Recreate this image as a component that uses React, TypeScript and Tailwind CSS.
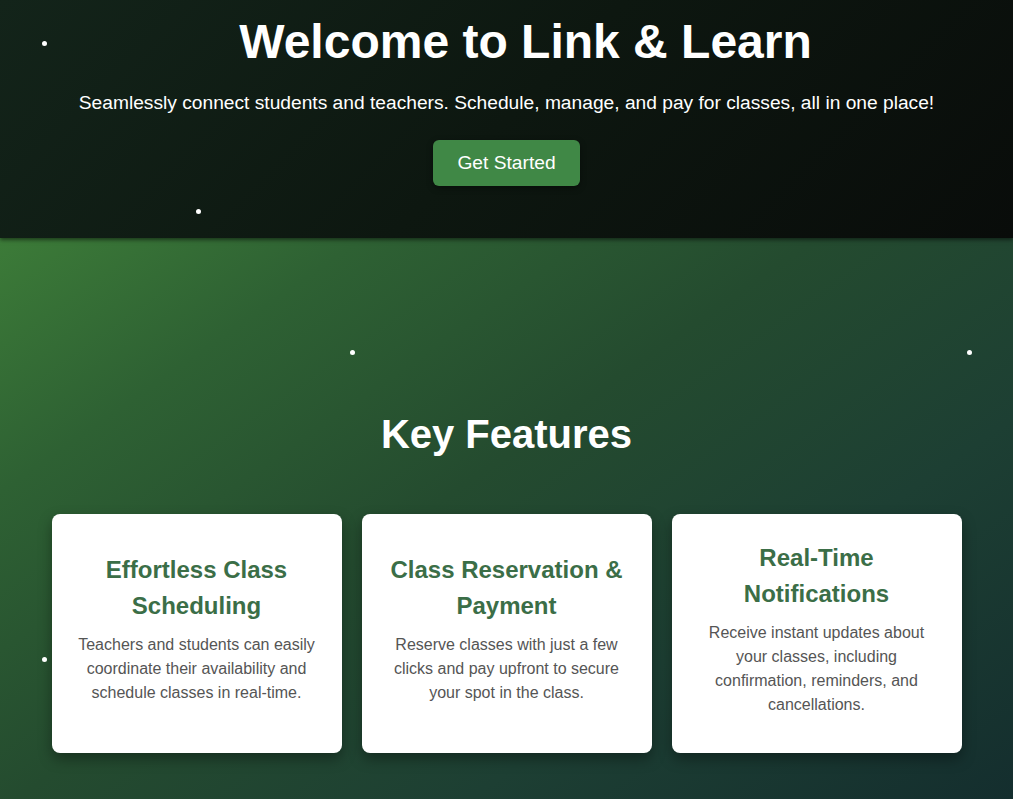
import React from "react";

const Dot = ({ className }: { className: string }) => (
  <span className={`absolute w-[5px] h-[5px] rounded-full bg-white ${className}`} />
);

const cards = [
  {
    title: "Effortless Class Scheduling",
    text: "Teachers and students can easily coordinate their availability and schedule classes in real-time.",
  },
  {
    title: "Class Reservation & Payment",
    text: "Reserve classes with just a few clicks and pay upfront to secure your spot in the class.",
  },
  {
    title: "Real-Time Notifications",
    text: "Receive instant updates about your classes, including confirmation, reminders, and cancellations.",
  },
];

export default function App() {
  return (
    <div className="relative w-full h-[799px] overflow-hidden font-['Liberation_Sans',Arial,sans-serif]">
      <header className="relative h-[238px] bg-[linear-gradient(135deg,#13241a_0%,#0d1710_50%,#090c0a_100%)] shadow-[0_2px_4px_rgba(0,0,0,0.5)] z-10 flex flex-col items-center pt-[14px]">
        <h1 className="pl-[38px] text-[48px] leading-[56px] font-bold text-white">Welcome to Link &amp; Learn</h1>
        <p className="mt-[21px] text-[19.2px] leading-[24px] text-white">
          Seamlessly connect students and teachers. Schedule, manage, and pay for classes, all in one place!
        </p>
        <button className="mt-[25px] w-[147px] h-[46px] rounded-[6px] bg-[#408846] text-white text-[19.2px] shadow-[0_2px_6px_rgba(0,0,0,0.4)]">
          Get Started
        </button>
      </header>
      <section className="relative h-[561px] bg-[linear-gradient(145deg,#3c7b38_0%,#2e6133_20%,#244b2f_45%,#1d3f33_70%,#142e2e_100%)] flex flex-col items-center pt-[170px]">
        <h2 className="text-[40px] leading-[52px] font-bold text-white">Key Features</h2>
        <div className="mt-[54px] flex gap-[20px]">
          {cards.map((c) => (
            <div
              key={c.title}
              className="w-[290px] h-[239px] rounded-[8px] bg-white shadow-[0_6px_14px_rgba(0,0,0,0.35)] px-[24px] flex flex-col justify-center items-center text-center"
            >
              <h3 className="text-[24px] leading-[36px] font-bold text-[#3b6e47] mb-[9px]">{c.title}</h3>
              <p className="text-[16px] leading-[24px] text-[#555555] mb-[10px]">{c.text}</p>
            </div>
          ))}
        </div>
      </section>
      <Dot className="left-[42px] top-[41px] z-20" />
      <Dot className="left-[196px] top-[209px] z-20" />
      <Dot className="left-[350px] top-[350px] z-20" />
      <Dot className="left-[967px] top-[350px] z-20" />
      <Dot className="left-[42px] top-[657px] z-20" />
    </div>
  );
}
